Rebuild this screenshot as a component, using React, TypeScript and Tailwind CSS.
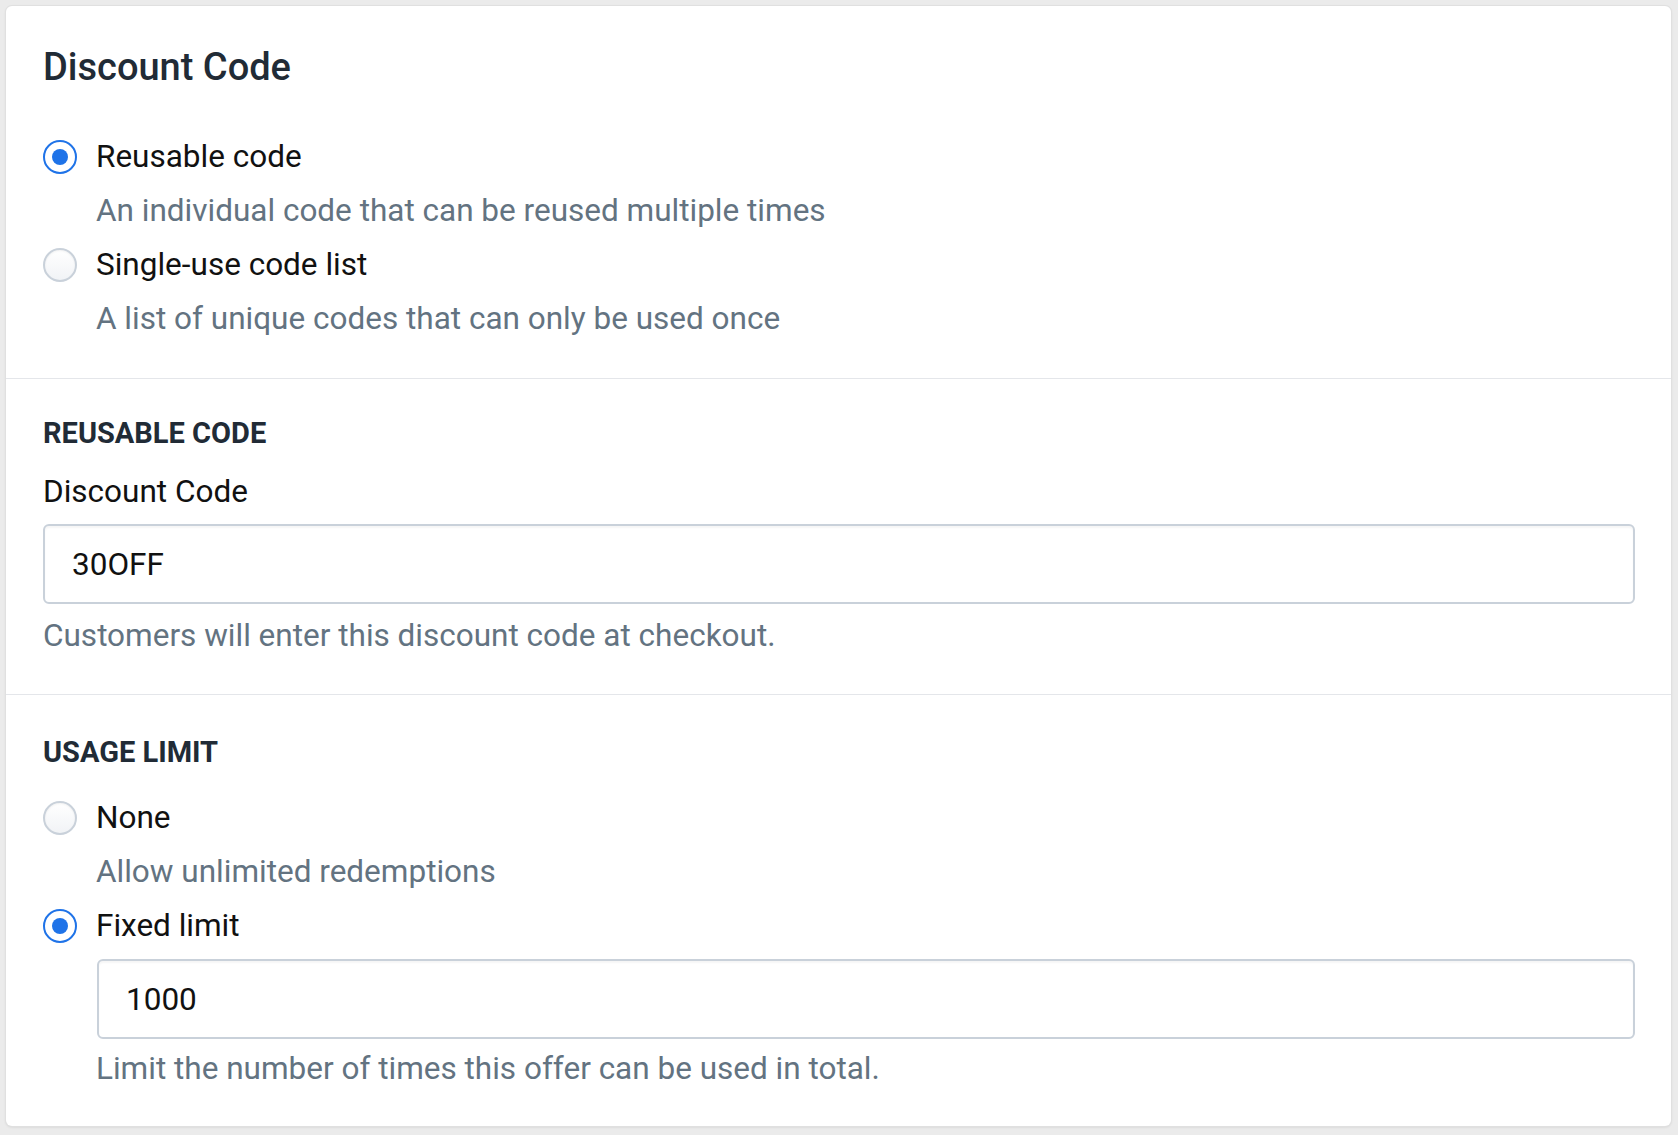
import { useState } from 'react'

type Option = { id: string; label: string; description?: string }

function Radio({ checked }: { checked: boolean }) {
  if (checked) {
    return (
      <span className="flex h-[34px] w-[34px] shrink-0 items-center justify-center rounded-full border-2 border-[#1f73e8] bg-white">
        <span className="h-[16px] w-[16px] rounded-full bg-[#1f73e8]" />
      </span>
    )
  }
  return (
    <span className="h-[34px] w-[34px] shrink-0 rounded-full border-2 border-[#c9d1da] bg-gradient-to-b from-white to-[#f1f3f6] shadow-[inset_0_1px_2px_rgba(0,0,0,0.06)]" />
  )
}

function RadioRow({
  option,
  checked,
  onSelect,
}: {
  option: Option
  checked: boolean
  onSelect: () => void
}) {
  return (
    <div>
      <button type="button" onClick={onSelect} className="flex h-[54px] items-center gap-[19px] text-left">
        <Radio checked={checked} />
        <span className="text-[31.5px] leading-[54px] text-[#111111]">{option.label}</span>
      </button>
      {option.description ? (
        <p className="pl-[53px] text-[31.5px] leading-[54px] text-[#637381]">{option.description}</p>
      ) : null}
    </div>
  )
}

function TextInput({ value, onChange }: { value: string; onChange: (v: string) => void }) {
  return (
    <input
      value={value}
      onChange={(e) => onChange(e.target.value)}
      className="h-[80px] w-full rounded-[6px] border-2 border-[#c9d1da] bg-white pl-[27px] text-[31.5px] text-[#111111] shadow-[inset_0_2px_2px_rgba(0,0,0,0.04)] outline-none focus:border-[#1f73e8]"
    />
  )
}

export default function App() {
  const [codeType, setCodeType] = useState('reusable')
  const [limitType, setLimitType] = useState('fixed')
  const [code, setCode] = useState('30OFF')
  const [limit, setLimit] = useState('1000')

  const codeOptions: Option[] = [
    { id: 'reusable', label: 'Reusable code', description: 'An individual code that can be reused multiple times' },
    { id: 'single', label: 'Single-use code list', description: 'A list of unique codes that can only be used once' },
  ]

  return (
    <div className="min-h-screen bg-[#ebebeb] p-[6px] font-['Roboto',sans-serif]">
      <div className="w-[1665px] rounded-[6px] bg-white shadow-[0_0_0_1px_#e0e0e0,0_1px_3px_rgba(0,0,0,0.12)]">
        <section className="pb-[32px] pl-[37px] pr-[36px] pt-[39px]">
          <h2 className="text-[38px] font-medium leading-[44px] text-[#212b36]">Discount Code</h2>
          <div className="mt-[41px]">
            {codeOptions.map((o) => (
              <RadioRow key={o.id} option={o} checked={codeType === o.id} onSelect={() => setCodeType(o.id)} />
            ))}
          </div>
        </section>

        <section className="border-t border-[#e4e6ea] pb-[34px] pl-[37px] pr-[36px] pt-[34px]">
          <h3 className="text-[29px] font-bold uppercase leading-[40px] text-[#212b36]">Reusable code</h3>
          <label className="mt-[15px] block text-[31.5px] leading-[48px] text-[#111111]">Discount Code</label>
          <div className="mt-[8px]">
            <TextInput value={code} onChange={setCode} />
          </div>
          <p className="mt-[8px] text-[31.5px] leading-[48px] text-[#637381]">Customers will enter this discount code at checkout.</p>
        </section>

        <section className="border-t border-[#e4e6ea] pb-[33px] pl-[37px] pr-[36px] pt-[37px]">
          <h3 className="text-[29px] font-bold uppercase leading-[40px] text-[#212b36]">Usage limit</h3>
          <div className="mt-[19px]">
            <RadioRow
              option={{ id: 'none', label: 'None', description: 'Allow unlimited redemptions' }}
              checked={limitType === 'none'}
              onSelect={() => setLimitType('none')}
            />
            <RadioRow
              option={{ id: 'fixed', label: 'Fixed limit' }}
              checked={limitType === 'fixed'}
              onSelect={() => setLimitType('fixed')}
            />
            <div className="pl-[53px]">
              <div className="mt-[6px] pl-[1px]">
                <TextInput value={limit} onChange={setLimit} />
              </div>
              <p className="mt-[6px] text-[31.5px] leading-[48px] text-[#637381]">
                Limit the number of times this offer can be used in total.
              </p>
            </div>
          </div>
        </section>
      </div>
    </div>
  )
}
